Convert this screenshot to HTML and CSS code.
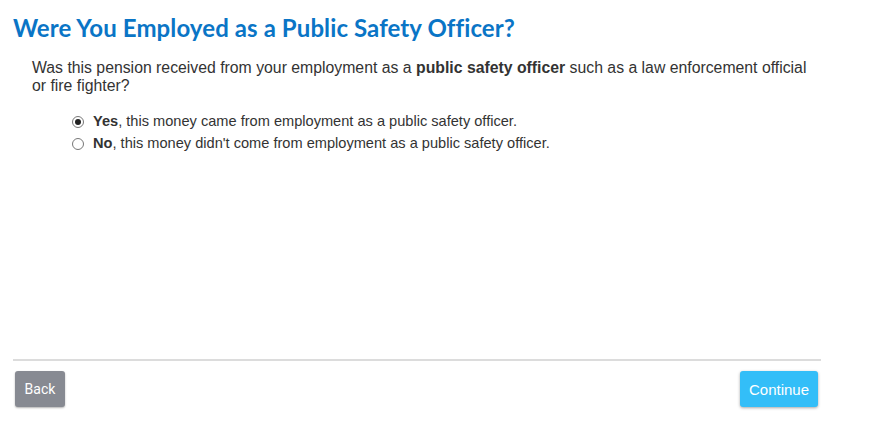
FILE: index.html
```html
<!DOCTYPE html>
<html>
<head>
<meta charset="utf-8">
<link rel="stylesheet" href="styles.css">
</head>
<body>
<div class="page">
  <h1 class="title">Were You Employed as a Public Safety Officer?</h1>
  <p class="question">Was this pension received from your employment as a <b>public safety officer</b> such as a law enforcement official or fire fighter?</p>
  <div class="options">
    <label class="option"><span class="radio checked"></span><span><b>Yes</b>, this money came from employment as a public safety officer.</span></label>
    <label class="option"><span class="radio"></span><span><b>No</b>, this money didn't come from employment as a public safety officer.</span></label>
  </div>
  <div class="footer">
    <button class="btn back">Back</button>
    <button class="btn continue">Continue</button>
  </div>
</div>
</body>
</html>
```
FILE: styles.css
```css
html, body { margin: 0; padding: 0; background: #fff; }
body { font-family: "Liberation Sans", Arial, sans-serif; color: #333; }
.page { width: 821px; padding: 0 0 0 13px; display: flex; flex-direction: column; height: 446px; box-sizing: border-box; }
.title { margin: 13px 0 0 0; font-family: Lato, "Open Sans", sans-serif; font-weight: 700; font-size: 24px; line-height: 30px; color: #0a75c6; letter-spacing: 0.1px; }
.question { margin: 16px 0 0 19px; font-size: 15.8px; line-height: 18px; width: 785px; }
.options { margin: 18px 0 0 59px; display: flex; flex-direction: column; gap: 5px; }
.option { display: flex; align-items: center; font-size: 14.6px; line-height: 17px; gap: 9px; }
.radio { width: 12px; height: 12px; border: 1px solid #777; border-radius: 50%; box-sizing: border-box; display: inline-flex; align-items: center; justify-content: center; background: #fff; }
.radio.checked::after { content: ""; width: 6px; height: 6px; border-radius: 50%; background: #222; }
.footer { margin-top: auto; margin-bottom: 39px; border-top: 2px solid #dcdcdc; padding-top: 10px; display: flex; justify-content: space-between; }
.btn { font-family: Roboto, "Liberation Sans", sans-serif; font-size: 14px; color: #fff; border: none; border-radius: 3px; height: 36px; cursor: pointer; }
.back { background: #878a92; width: 50px; margin-left: 2px; box-shadow: 0 1px 2px rgba(0,0,0,0.3); }
.continue { background: #33bef8; width: 78px; margin-right: 3px; box-shadow: 0 1px 3px rgba(0,0,0,0.35); font-family: "Liberation Sans", Arial, sans-serif; font-size: 15px; }
```
